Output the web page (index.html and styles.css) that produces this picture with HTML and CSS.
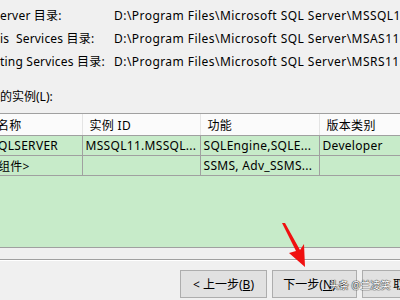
FILE: index.html
```html
<!DOCTYPE html>
<html lang="zh-CN">
<head>
<meta charset="utf-8">
<link rel="stylesheet" href="styles.css">
</head>
<body>
<div class="page">
  <div class="paths">
    <div class="label">erver 目录:</div><div class="path">D:\Program Files\Microsoft SQL Server\MSSQL11.MSSQLSERVER</div>
    <div class="label">is&nbsp; Services 目录:</div><div class="path">D:\Program Files\Microsoft SQL Server\MSAS11.MSSQLSERVER</div>
    <div class="label">ting Services 目录:</div><div class="path">D:\Program Files\Microsoft SQL Server\MSRS11.MSSQLSERVER</div>
  </div>
  <div class="caption">的实例(L):</div>
  <div class="listview">
    <table class="grid">
      <colgroup><col class="c1"><col class="c2"><col class="c3"><col class="c4"></colgroup>
      <thead>
        <tr><th>名称</th><th>实例 ID</th><th>功能</th><th>版本类别</th></tr>
      </thead>
      <tbody>
        <tr><td>QLSERVER</td><td>MSSQL11.MSSQL...</td><td>SQLEngine,SQLE...</td><td>Developer</td></tr>
        <tr><td>组件&gt;</td><td></td><td>SSMS, Adv_SSMS...</td><td></td></tr>
      </tbody>
    </table>
  </div>
  <div class="sep"></div>
  <div class="buttons">
    <button class="btn">&lt; 上一步(<u>B</u>)</button>
    <button class="btn btn-next">下一步(<u>N</u>) &gt;</button>
    <button class="btn btn-cancel">取消</button>
  </div>
  <div class="watermark">头条 @兰凌笑</div>
  <svg class="arrow" width="400" height="300" viewBox="0 0 400 300">
    <polygon points="282,223 285,223 300,250 304,244 305,267 289,253 296,251" fill="#f01010"/>
  </svg>
</div>
</body>
</html>
```
FILE: styles.css
```css
html, body {
  margin: 0;
  padding: 0;
}
body {
  background: #f0f0f0;
  font-family: "Noto Sans", "Noto Sans CJK SC", sans-serif;
  font-size: 12px;
  color: #000;
}
.page {
  position: relative;
  width: 400px;
  height: 300px;
  overflow: hidden;
}
.paths {
  display: grid;
  grid-template-columns: 114px 1fr;
  padding-top: 4px;
  line-height: 23px;
  white-space: nowrap;
}
.label { letter-spacing: 0.2px; }
.path { letter-spacing: 0.45px; }
.caption {
  margin-top: 12px;
  line-height: 23px;
}
.listview {
  margin-top: 5px;
  margin-left: -3px;
  width: 420px;
  height: 133px;
  background: #c7ebc9;
  border-top: 1px solid #a0a0a0;
  border-bottom: 1px solid #a0a0a0;
}
.grid {
  border-collapse: collapse;
  table-layout: fixed;
  width: 420px;
  white-space: nowrap;
  letter-spacing: 0.3px;
}
.c1 { width: 85px; }
.c2 { width: 118px; }
.c3 { width: 119px; }
.c4 { width: 98px; }
.grid th {
  background: #fbfbfb;
  font-weight: normal;
  text-align: left;
  height: 21px;
  padding: 0 0 0 7px;
  border-right: 1px solid #e4e4e4;
  border-bottom: 1px solid #a0a0a0;
}
.grid th:first-child { padding-left: 0; }
.grid td {
  height: 19px;
  padding: 0 0 0 3px;
  border: 1px solid #a0a0a0;
  border-top: none;
}
.grid td:first-child { padding-left: 1px; border-left: none; }
.sep {
  margin-top: 11px;
  height: 1px;
  background: #a0a0a0;
  border-bottom: 1px solid #fff;
}
.buttons {
  display: flex;
  gap: 5px;
  padding-left: 180px;
  margin-top: 9px;
}
.btn {
  flex: none;
  width: 87px;
  height: 28px;
  padding: 0;
  background: #e1e1e1;
  border: 1px solid #adadad;
  font-family: inherit;
  font-size: 12px;
  color: #000;
}
.btn-next { width: 85px; }
.btn-cancel { width: 86px; }
.watermark {
  position: absolute;
  left: 329px;
  top: 277px;
  font-size: 10px;
  color: #fff;
  text-shadow: 0 0 1px #333, 0 0 1px #333, 0 0 1px #333;
}
.arrow {
  position: absolute;
  left: 0;
  top: 0;
}
```
